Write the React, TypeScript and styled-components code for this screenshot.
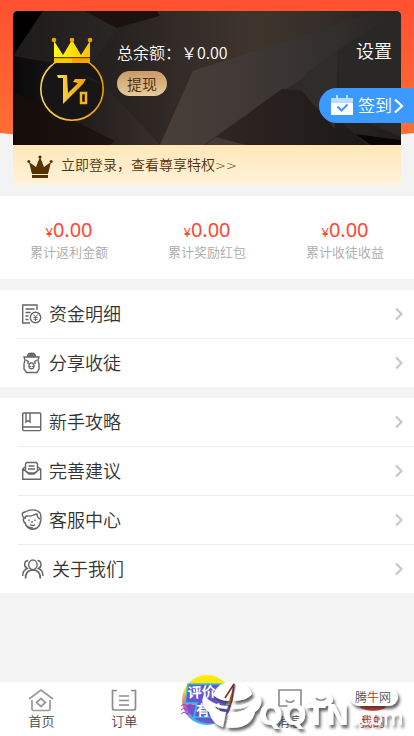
import React from 'react';
import styled, { createGlobalStyle } from 'styled-components';

const GlobalStyle = createGlobalStyle`
  * { box-sizing: border-box; }
  body {
    margin: 0;
    background: #f3f3f3;
    color: #333;
    font-family: "Noto Sans", "Noto Sans CJK SC", sans-serif;
    font-weight: 350;
  }
  button { border: 0; padding: 0; background: none; font: inherit; color: inherit; cursor: pointer; }
  a { color: inherit; text-decoration: none; }
  svg { display: block; flex: none; }
`;

const Page = styled.div`
  display: flex;
  flex-direction: column;
  min-height: 100vh;
`;

const Hero = styled.header`
  position: relative;
  padding: 11px 13px;
  overflow: hidden;

  &::before {
    content: '';
    position: absolute;
    z-index: -1;
    left: -20%;
    right: -20%;
    top: -40px;
    height: 182px;
    background: linear-gradient(#ff5030 22%, #ff7034);
    border-radius: 0 0 50% 50% / 0 0 30px 30px;
  }
`;

const Card = styled.section`
  border-radius: 5px;
  overflow: hidden;
`;

const Member = styled.div`
  position: relative;
  display: flex;
  height: 134px;
  padding-left: 26px;
  color: #fff;
`;

const Facets = styled.svg`
  position: absolute;
  inset: 0;
  z-index: -1;
  width: 100%;
  height: 100%;
`;

const Badge = styled.svg`
  margin-top: 26px;
`;

const Balance = styled.div`
  flex: 1;
  display: flex;
  flex-direction: column;
  align-items: flex-start;
  padding: 29px 0 0 12px;
  font-size: 16px;
  line-height: 24px;
  font-family: "Noto Sans CJK SC", sans-serif;
  white-space: nowrap;
`;

const Withdraw = styled.button`
  height: 25px;
  margin-top: 7px;
  padding: 0 10px;
  border-radius: 13px;
  background: linear-gradient(#c89b68, #e6cb9b);
  color: #4c2b09;
  font-size: 15px;
  line-height: 24px;
`;

const Settings = styled.button`
  align-self: flex-start;
  margin: 26px 9px 0 0;
  font-size: 18px;
  line-height: 28px;
`;

const SignIn = styled.button`
  position: absolute;
  right: 0;
  top: 88px;
  display: flex;
  align-items: center;
  gap: 5px;
  width: 95px;
  height: 35px;
  padding-left: 12px;
  border-radius: 18px 0 0 18px;
  background: #3b9aff;
  color: #fff;
  font-size: 17px;
  line-height: 34px;
  white-space: nowrap;

  svg:last-child { margin-left: -5px; }
`;

const Perks = styled.a`
  display: flex;
  align-items: center;
  gap: 8px;
  height: 40px;
  padding-left: 14px;
  background: linear-gradient(#ffe8b9, #fff2da);
  color: #553006;
  font-size: 14px;
  line-height: 20px;

  svg { margin-top: 3px; }
`;

const Arrows = styled.span`
  font-family: "DejaVu Sans", sans-serif;
  font-size: 13px;
`;

const Stats = styled.dl`
  display: grid;
  grid-template-columns: repeat(3, 1fr);
  margin: 0;
  padding: 20px 0 18px;
  background: #fff;
  text-align: center;
`;

const Stat = styled.div`
  display: flex;
  flex-direction: column-reverse;
`;

const StatName = styled.dt`
  color: #aaa;
  font-size: 13px;
  line-height: 18px;
`;

const StatValue = styled.dd`
  margin: 0;
  color: #ff4633;
  font-size: 20px;
  font-weight: 400;
  line-height: 27px;
  height: 27px;
`;

const Currency = styled.span`
  font-size: 13px;
  line-height: 1;
`;

const MenuGroup = styled.nav`
  margin-top: 11px;
  padding-left: 18px;
  background: #fff;
`;

const MenuRow = styled.a`
  display: flex;
  align-items: center;
  gap: 6px;
  height: 49px;
  padding: 0 9px 0 3px;
  border-bottom: 1px solid #eee;
  font-size: 18px;
  line-height: 28px;

  &:last-child { height: 48px; border-bottom: 0; }
  svg:last-child { margin-left: auto; }
`;

const TabBar = styled.nav`
  position: sticky;
  bottom: 0;
  display: grid;
  grid-template-columns: repeat(5, 1fr);
  height: 54px;
  margin-top: auto;
  background: #fff;
  color: #555;
  font-size: 13px;
`;

const Tab = styled.a<{ $active?: boolean }>`
  display: flex;
  flex-direction: column;
  align-items: center;
  padding-top: 6px;
  line-height: 18px;
  color: ${(p) => (p.$active ? '#e43c2c' : '#444')};
`;

const PromoTab = styled.a`
  display: flex;
  justify-content: center;

  svg { margin-top: -9px; }
`;

const Watermark = styled.svg`
  position: absolute;
  right: 0;
  bottom: 0;
  pointer-events: none;
`;

const Glyph = ({ children, width = 22 }: { children: React.ReactNode; width?: number }) => (
  <svg width={width} height="22" viewBox={`0 0 ${width} 22`} fill="none" stroke="#666" strokeWidth="1.4" aria-hidden="true">
    {children}
  </svg>
);

const Chevron = () => (
  <svg width="12" height="16" viewBox="0 0 12 16" fill="none" stroke="#c7c7cc" strokeWidth="2.2" aria-hidden="true">
    <path d="M3 2.500 8.500 8 3 13.500" />
  </svg>
);

const WideChevron = () => (
  <svg width="14" height="16" viewBox="0 0 14 16" fill="none" stroke="#fff" strokeWidth="2.2" aria-hidden="true">
    <path d="M3 1.500 10 8l-7 6.500" />
  </svg>
);

const LedgerIcon = () => (
  <Glyph>
    <path d="M16 7V2H1.700v18H9M4.500 6h9M4.500 9.500h5M4.500 13h3M4.500 16.500h3" />
    <circle cx="14.500" cy="14.500" r="5.200" />
    <path d="m12.500 11.500 2 2.500 2-2.500M12.500 14.500h4M12.500 16.300h4M14.500 14v4" strokeWidth="1" />
  </Glyph>
);

const ShareIcon = () => (
  <Glyph>
    <path d="M6.500 5c0-5 8-5 8 0" fill="#999" />
    <path d="M3 5h15l-1 3 1 4v5l-2 3.500H5.500L3 17v-5l1-4z" />
    <path d="M8 4h5M9 2.500h3M5 8l3 2M16 8l-3 2M7 10v2M14 10v2" />
    <path d="M8 13c1-3 4-3 5 0 1 5-6 5-5 0M9.500 14v1M11.500 14v1" />
  </Glyph>
);

const GuideIcon = () => (
  <Glyph>
    <rect x="1.700" y="2" width="18" height="17.600" rx="1" />
    <path d="M2 16h17M5 2v9l2-1.500L9 11V2" />
  </Glyph>
);

const AdviceIcon = () => (
  <Glyph>
    <path d="M4.500 10V4l1-1.500h10l1 1.500v6" />
    <path d="M4 7 1.700 9v10.300h18V9L17 7M2 9l5 4h7l5-4M7.500 6h6M7 9h7" />
    <path d="m5 11 3 3h5l3-3" />
  </Glyph>
);

const SupportIcon = () => (
  <Glyph>
    <path d="M3.500 9C0 7 1 3 4 3c5-3 12-3 15 1 2 4 1 12-3 15-6 3-11 0-12-6" />
    <path d="M4 10c0-2 1-3 2-3 4 1 8-2 10-2 0 2 1 4 3 5M3.500 9c-2 0-1 5 1 5M8 10.500v1.500M14 10.500v1.500M11 12v2M9 15.500c2 1.500 4 1 5 0M5 16c2 3 4 3 7 3" />
  </Glyph>
);

const TeamIcon = () => (
  <Glyph width={25}>
    <path d="M1.700 18c0-4 1-6 4.500-7.500-4-2-3-8 1-8M22 18c0-4-1-6-4.500-7.500 4-2 3-8-1-8" />
    <ellipse cx="11.900" cy="6.800" rx="4.200" ry="4.800" />
    <path d="M4.500 20.500c0-5 2-8.500 7.400-8.500s7.400 3.500 7.400 8.500" strokeWidth="1.700" />
  </Glyph>
);

const HomeIcon = () => (
  <svg width="26" height="24" viewBox="0 0 26 24" fill="none" stroke="#999" strokeWidth="1.700" aria-hidden="true">
    <path d="M1 11 13 2l12 9M4 12v9c0 1 .5 1.500 1.500 1.500h15c1 0 1.500-.5 1.500-1.500v-9" />
    <path d="m8.500 14.500 4.500-4 4.500 4-4.500 4z" />
  </svg>
);

const OrderIcon = () => (
  <svg width="26" height="24" viewBox="0 0 26 24" fill="none" stroke="#8b8b8b" strokeWidth="1.700" aria-hidden="true">
    <path d="M6 2.500H1.500V20c0 1.500.5 2 2 2h19c1.500 0 2-.5 2-2V2.500H20M8 8h10M8 12.500h10M8 17h10" />
  </svg>
);

const MessageIcon = () => (
  <svg width="26" height="24" viewBox="0 0 26 24" fill="none" stroke="#8b8b8b" strokeWidth="1.600" aria-hidden="true">
    <path d="M2 2h22v16h-8l-3 3-3-3H2zM9 12c1 3 7 3 8 0" />
  </svg>
);

const ProfileIcon = () => (
  <svg width="26" height="24" viewBox="0 0 26 24" fill="#e43c2c" aria-hidden="true">
    <circle cx="13" cy="9" r="5" /><path d="M0 19c3-5 23-5 26 0-4 5-22 5-26 0" />
  </svg>
);

const PromoIcon = () => (
  <svg width="54" height="56" viewBox="0 0 54 56" aria-hidden="true">
    <defs>
      <linearGradient id="promoRing" x1=".7" x2=".5" y2="1">
        <stop offset=".4" stopColor="#ffe900" /><stop offset=".75" stopColor="#f047c4" /><stop offset="1" stopColor="#1ecbed" />
      </linearGradient>
    </defs>
    <circle cx="27" cy="27" r="25" fill="url(#promoRing)" />
    <path d="M6 32h45c-4 23-37 26-45 0" fill="#7154cf" />
    <path d="M8 11h40l-3 16h3l-4 17H14l3-14H5z" fill="#6557d0" stroke="#21c9ee" strokeWidth="1.500" />
    <path d="m1 33 3-2 3 2 3-2 3 2M1 37l3-2 3 2 3-2 3 2M1 41l3-2 3 2 3-2 3 2" fill="none" stroke="#824dc5" />
    <g fill="#fff" fontWeight="700" fontSize="14">
      <text x="8" y="25" transform="rotate(-3 8 25)">评价</text>
      <text x="16" y="42">有礼</text>
    </g>
  </svg>
);

const CardFacets = () => (
  <Facets viewBox="0 0 388 134" preserveAspectRatio="none" aria-hidden="true">
    <defs>
      <linearGradient id="night"><stop stopColor="#090808" /><stop offset=".15" stopColor="#1d1a1a" /><stop offset=".43" stopColor="#40352f" /><stop offset=".72" stopColor="#302a28" /><stop offset="1" stopColor="#1f1e1d" /></linearGradient>
      <linearGradient id="beam"><stop stopColor="#4a3f38" /><stop offset=".4" stopColor="#3e3835" /><stop offset="1" stopColor="#272625" /></linearGradient>
      <linearGradient id="shade"><stop stopColor="#1d1b1b" /><stop offset="1" stopColor="#2a2624" /></linearGradient>
      <linearGradient id="dusk"><stop stopColor="#221f1e" /><stop offset=".58" stopColor="#40352d" /><stop offset="1" stopColor="#2a2624" /></linearGradient>
      <linearGradient id="low"><stop stopColor="#302724" /><stop offset="1" stopColor="#1c1918" /></linearGradient>
    </defs>
    <path fill="url(#night)" d="M0 0h388v134H0z" />
    <path fill="#000" d="M0 0h30L16 40 0 44z" />
    <path fill="url(#shade)" d="M30 0h42l32 17-28 41L0 45z" />
    <path fill="#1b110e" d="M72 0h72l3 5-43 12z" />
    <path fill="url(#dusk)" d="m104 17 43-12-3-5h220L180 60l-33 74-71-76z" />
    <path fill="url(#beam)" d="m180 60 184-60h24L191 134h-44z" />
    <path fill="url(#low)" d="m191 134 78-56 25 2 60 54z" />
    <path fill="#292827" d="m325 39 63-39v126l-62-26z" />
    <path fill="#302c2a" d="m325 39-32 24-6 15 35 40z" />
    <path fill="#080706" d="m342 123 46 6v5h-30z" />
    <path fill="#190e0b" d="m0 80 102 50-5 4H0z" opacity=".7" />
    <path fill="#433a35" d="m203 126 30 8h-41z" />
  </Facets>
);

const MemberBadge = () => (
  <Badge width="66" height="86" viewBox="0 0 66 86" role="img" aria-label="V0">
    <defs>
      <linearGradient id="gold" x2="1"><stop stopColor="#ffd550" /><stop offset="1" stopColor="#eea000" /></linearGradient>
      <linearGradient id="crown" x2="1"><stop stopColor="#ffff12" /><stop offset="1" stopColor="#ffc000" /></linearGradient>
    </defs>
    <circle cx="33" cy="52" r="31.200" fill="#171516" stroke="url(#gold)" strokeWidth="1.600" />
    <path d="m41 37 24 12-12-7z" fill="#302e2c" />
    <path fill="url(#crown)" d="m15 4 9 14 9-15 9 15 9-14v22H15z" />
    <path fill="#5d3d00" d="M15 20h36v1.500H15z" /><path fill="#ffc400" d="M15 21.500h18V26H15z" /><path fill="#ff9f00" d="M33 21.500h18V26H33z" />
    <g fill="#eda600"><circle cx="15" cy="3" r="2.300" /><circle cx="33" cy="3" r="2.300" /><circle cx="51" cy="3" r="2.300" /></g>
    <path fill="url(#gold)" d="M18 38h10l1 18 10-10-5-1 2-3h11l-3 5-20 20V41h-5z" />
    <path fill="none" stroke="#f9b313" strokeWidth="2.500" d="M42 56h5v10h-5z" />
  </Badge>
);

const CalendarIcon = () => (
  <svg width="22" height="21" viewBox="0 0 22 21" aria-hidden="true">
    <path fill="#b9dcff" d="M0 3h5V0h2v3h8V0h2v3h5v5H0z" />
    <path fill="#fff" d="M0 8h22v12H0z" /><path d="m6.500 11.500 4 4 6-6" fill="none" stroke="#3b9aff" strokeWidth="2" />
  </svg>
);

const CrownIcon = () => (
  <svg width="26" height="24" viewBox="0 0 26 24" fill="#573100" aria-hidden="true">
    <path d="m2 7 7 5 4-10 4 10 7-5-3 12H5zM5 20h16v3H5z" />
    <circle cx="1.800" cy="6.500" r="1.500" /><circle cx="13" cy="2" r="1.600" /><circle cx="24.200" cy="6.500" r="1.500" />
  </svg>
);

const SiteMark = () => (
  <Watermark width="212" height="60" viewBox="-8 -2 212 60" role="img" aria-label="腾牛网 QQTN.com">
    <defs>
      <filter id="drop" x="-10%" y="-10%" width="125%" height="140%">
        <feDropShadow dx="2" dy="3" stdDeviation="1.500" floodColor="#333" floodOpacity=".75" />
      </filter>
    </defs>
    <g filter="url(#drop)" fill="#fff">
      <path d="M4 15C9 3 18 4 24 5l-5 18C12 23 6 20 2 16zM27 5c7 0 13 4 15 11-4 5-11 7-19 7z" />
      <path d="M-6 17c5 7 15 11 24 11l-1 3c-4 0-9-1-13-3 4 5 8 6 12 6l-3 15C5 47 1 41-1 34-8 29-9 22-6 17M49 17c-6 8-17 11-27 11l-1 3c7 0 14-1 19-4-5 6-12 8-20 7l-4 15c14 3 26-2 29-15 7-5 8-12 4-17" />
      <ellipse cx="111" cy="22" rx="12" ry="7" />
      <rect x="140" y="10" width="48" height="18" rx="9" />
      <g fontFamily="DejaVu Sans" fontWeight="700" fontSize="28">
        <text x="49" y="47">QQTN</text>
        <text x="142" y="47" fontSize="21" fontWeight="400">.com</text>
      </g>
    </g>
    <path d="m15 20 9-14-2 16-3 8" stroke="#812b2b" strokeWidth="1.600" fill="none" />
    <path d="M106 20c2 3 8 3 10 0" stroke="#8b8b8b" strokeWidth="1.500" fill="none" />
    <text x="145" y="24" fontSize="12" fill="#555">腾<tspan fill="#b03a20">牛</tspan>网</text>
  </Watermark>
);

const stats = ['累计返利金额', '累计奖励红包', '累计收徒收益'];
const groups = [
  [
    { label: '资金明细', Icon: LedgerIcon },
    { label: '分享收徒', Icon: ShareIcon },
  ],
  [
    { label: '新手攻略', Icon: GuideIcon },
    { label: '完善建议', Icon: AdviceIcon },
    { label: '客服中心', Icon: SupportIcon },
    { label: '关于我们', Icon: TeamIcon },
  ],
];

export default function App() {
  return (
    <Page>
      <GlobalStyle />
      <Hero>
        <Card>
          <Member>
            <CardFacets />
            <MemberBadge />
            <Balance>
              <span>总余额：￥0.00</span>
              <Withdraw>提现</Withdraw>
            </Balance>
            <Settings>设置</Settings>
          </Member>
          <Perks href="#login">
            <CrownIcon />
            <span>立即登录，查看尊享特权<Arrows>&gt;&gt;</Arrows></span>
          </Perks>
        </Card>
        <SignIn><CalendarIcon />签到<WideChevron /></SignIn>
      </Hero>
      <Stats>
        {stats.map((name) => (
          <Stat key={name}>
            <StatName>{name}</StatName>
            <StatValue><Currency>¥</Currency>0.00</StatValue>
          </Stat>
        ))}
      </Stats>
      {groups.map((rows) => (
        <MenuGroup key={rows[0].label}>
          {rows.map(({ label, Icon }) => (
            <MenuRow key={label} href="#"><Icon />{label}<Chevron /></MenuRow>
          ))}
        </MenuGroup>
      ))}
      <TabBar>
        <Tab href="#home"><HomeIcon />首页</Tab>
        <Tab href="#orders"><OrderIcon />订单</Tab>
        <PromoTab href="#promo" aria-label="评价有礼"><PromoIcon /></PromoTab>
        <Tab href="#messages"><MessageIcon />消息</Tab>
        <Tab href="#me" $active><ProfileIcon />我的</Tab>
        <SiteMark />
      </TabBar>
    </Page>
  );
}
